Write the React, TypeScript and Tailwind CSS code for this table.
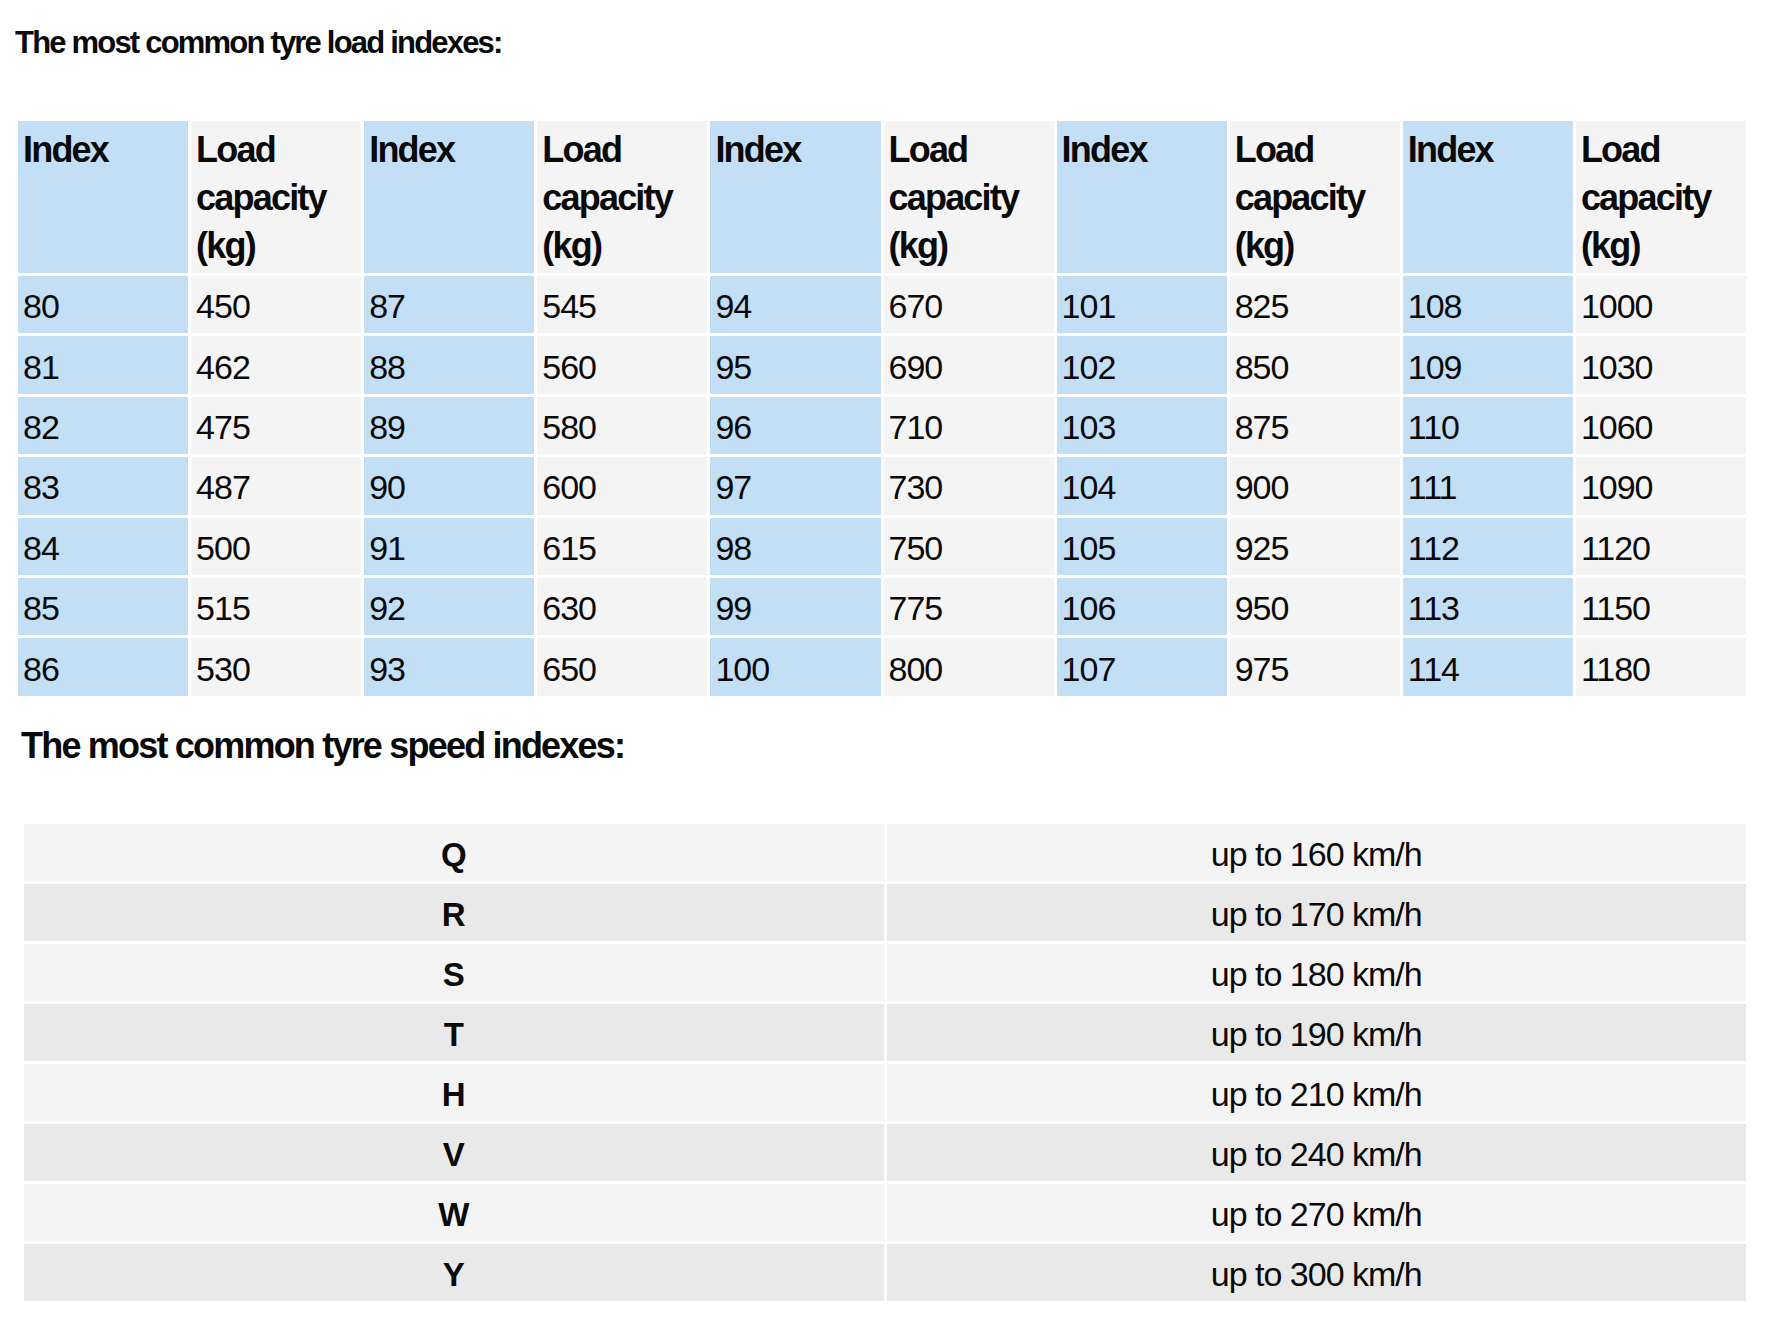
const capacities = [
  [450, 462, 475, 487, 500, 515, 530],
  [545, 560, 580, 600, 615, 630, 650],
  [670, 690, 710, 730, 750, 775, 800],
  [825, 850, 875, 900, 925, 950, 975],
  [1000, 1030, 1060, 1090, 1120, 1150, 1180],
];

const speeds = [
  { code: "Q", kmh: 160 },
  { code: "R", kmh: 170 },
  { code: "S", kmh: 180 },
  { code: "T", kmh: 190 },
  { code: "H", kmh: 210 },
  { code: "V", kmh: 240 },
  { code: "W", kmh: 270 },
  { code: "Y", kmh: 300 },
];

function LoadTable() {
  const rows = [0, 1, 2, 3, 4, 5, 6];
  return (
    <div className="ml-[18px] mt-[60px] grid w-[1728px] grid-cols-10 gap-x-[3px] gap-y-[3px]">
      {capacities.map((_, g) => (
        <div key={`h${g}`} className="contents">
          <div className="bg-[#c3dff5] pb-[3px] pl-[5px] pt-[5px] text-[36px] font-bold leading-[48px] tracking-[-1.8px]">
            Index
          </div>
          <div className="bg-[#f4f4f4] pb-[3px] pl-[5px] pt-[5px] text-[36px] font-bold leading-[48px] tracking-[-1.8px]">
            Load capacity (kg)
          </div>
        </div>
      ))}
      {rows.map((r) =>
        capacities.map((col, g) => (
          <div key={`r${r}g${g}`} className="contents">
            <div className="flex h-[57.4px] items-center bg-[#c3dff5] pl-[5px] pt-[4px] text-[34px] tracking-[-1px]">
              {80 + g * 7 + r}
            </div>
            <div className="flex h-[57.4px] items-center bg-[#f4f4f4] pl-[5px] pt-[4px] text-[34px] tracking-[-1px]">
              {col[r]}
            </div>
          </div>
        ))
      )}
    </div>
  );
}

function SpeedTable() {
  return (
    <div className="ml-[24px] mt-[57px] grid w-[1722px] grid-cols-2 gap-[3px]">
      {speeds.map((s, i) => (
        <div key={s.code} className="contents">
          <div
            className={`flex h-[57px] items-center justify-center pt-[5px] text-[33px] font-bold ${
              i % 2 === 0 ? "bg-[#f4f4f4]" : "bg-[#e9e9e9]"
            }`}
          >
            {s.code}
          </div>
          <div
            className={`flex h-[57px] items-center justify-center pt-[4px] text-[34px] tracking-[-1px] ${
              i % 2 === 0 ? "bg-[#f4f4f4]" : "bg-[#e9e9e9]"
            }`}
          >
            up to {s.kmh} km/h
          </div>
        </div>
      ))}
    </div>
  );
}

export default function App() {
  return (
    <div className="min-h-screen bg-white pt-[25px] font-['Liberation_Sans',Arial,sans-serif] text-[#0a0a0a]">
      <h2 className="pl-[15px] text-[31px] font-bold leading-[36px] tracking-[-1.8px]">
        The most common tyre load indexes:
      </h2>
      <LoadTable />
      <h2 className="mt-[29px] pl-[21px] text-[36px] font-bold leading-[42px] tracking-[-1.8px]">
        The most common tyre speed indexes:
      </h2>
      <SpeedTable />
    </div>
  );
}
